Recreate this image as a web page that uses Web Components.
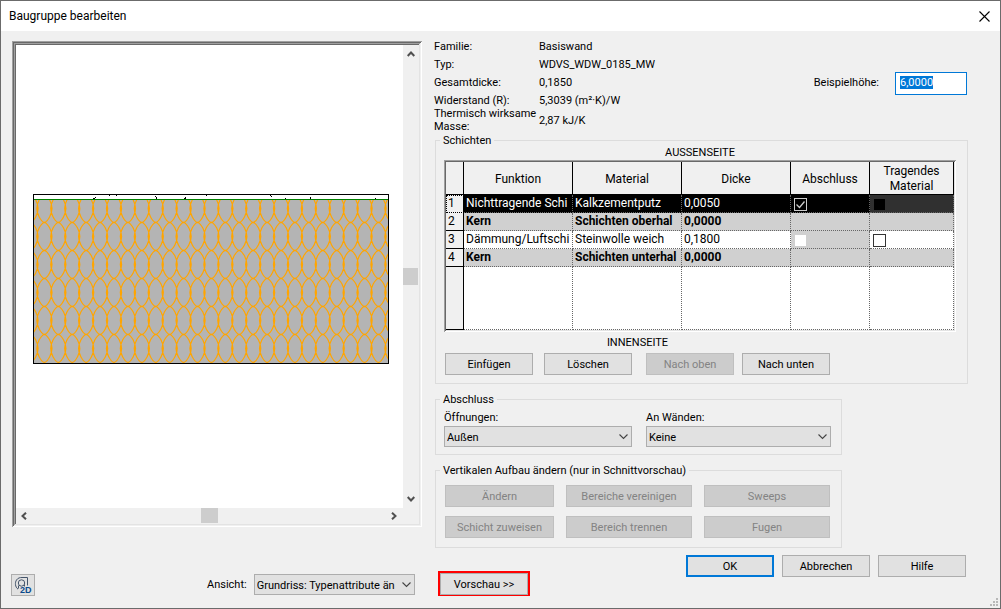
<!DOCTYPE html>
<html lang="de">
<head>
<meta charset="utf-8">
<title>Baugruppe bearbeiten</title>
<style>
  html, body {
    margin: 0;
    min-height: 100%;
  }
  body {
    --face: #f0f0f0;
    --line: #dcdcdc;
    --accent: #0078d7;
    display: flex;
    min-height: 100vh;
    font: 11px/13px Roboto, "Noto Sans", sans-serif;
    color: #000;
  }
</style>
</head>
<body>
<app-dialog caption="Baugruppe bearbeiten">
  <wall-preview slot="left"></wall-preview>
  <view-bar slot="left"></view-bar>
  <type-info slot="right"></type-info>
  <group-box slot="right" caption="Schichten">
    <layer-editor></layer-editor>
  </group-box>
  <group-box slot="right" caption="Abschluss" narrow>
    <wrap-options></wrap-options>
  </group-box>
  <group-box slot="right" caption="Vertikalen Aufbau ändern (nur in Schnittvorschau)" narrow>
    <vertical-tools></vertical-tools>
  </group-box>
  <dialog-actions slot="right"></dialog-actions>
</app-dialog>

<script>
class AppDialog extends HTMLElement {
  constructor() {
    super();
    this.attachShadow({ mode: 'open' });
  }

  connectedCallback() {
    this.shadowRoot.innerHTML = `
      <style>
        :host {
          position: relative;
          display: flex;
          flex-direction: column;
          flex: 1;
          box-sizing: border-box;
          border: 1px solid #6b6b6b;
          background: var(--face);
        }
        header {
          display: flex;
          align-items: center;
          justify-content: space-between;
          height: 30px;
          padding: 0 10px 0 8px;
          background: #fff;
        }
        h1 {
          margin: 0;
          font-size: 12px;
          font-weight: 400;
        }
        .close {
          display: flex;
          padding: 0;
          border: 0;
          background: none;
        }
        main {
          display: grid;
          grid-template-columns: minmax(0, 10fr) minmax(0, 13fr);
          column-gap: 13px;
          flex: 1;
          padding: 9px 32px 12px 11px;
        }
        .col {
          display: flex;
          flex-direction: column;
          min-width: 0;
        }
        .grip {
          position: absolute;
          right: 2px;
          bottom: 2px;
        }
      </style>
      <header>
        <h1>${this.getAttribute('caption')}</h1>
        <button class="close" aria-label="Schließen">
          <svg width="11" height="11" viewBox="0 0 11 11"><path d="M.5.5l10 10M10.5.5l-10 10" stroke="#000" stroke-width="1.1"/></svg>
        </button>
      </header>
      <main>
        <div class="col"><slot name="left"></slot></div>
        <div class="col"><slot name="right"></slot></div>
      </main>
      <svg class="grip" width="8" height="8" viewBox="0 0 8 8" fill="#b8b8b8">
        <path d="M6 0h2v2h-2zM3 3h2v2h-2zM6 3h2v2h-2zM0 6h2v2h-2zM3 6h2v2h-2zM6 6h2v2h-2z"/>
      </svg>
    `;
  }
}

class PushButton extends HTMLElement {
  constructor() {
    super();
    this.attachShadow({ mode: 'open' });
  }

  connectedCallback() {
    this.shadowRoot.innerHTML = `
      <style>
        :host {
          display: block;
          width: 88px;
          height: 22px;
        }
        button {
          display: block;
          box-sizing: border-box;
          width: 100%;
          height: 100%;
          padding: 0;
          border: 1px solid #adadad;
          background: #e1e1e1;
          color: #000;
          font: inherit;
        }
        button:disabled {
          border-color: #bfbfbf;
          background: #ccc;
          color: #838383;
        }
        :host([primary]) button {
          border: 2px solid var(--accent);
        }
      </style>
      <button ${this.hasAttribute('disabled') ? 'disabled' : ''}><slot></slot></button>
    `;
  }
}

class DropDown extends HTMLElement {
  constructor() {
    super();
    this.attachShadow({ mode: 'open' });
  }

  connectedCallback() {
    this.shadowRoot.innerHTML = `
      <style>
        :host {
          display: flex;
          flex-direction: column;
          gap: 2px;
        }
        :host([inline]) {
          flex-direction: row;
          align-items: center;
          gap: 7px;
        }
        .box {
          display: grid;
          flex: 1;
          align-items: center;
        }
        select, svg {
          grid-area: 1 / 1;
        }
        select {
          box-sizing: border-box;
          width: 100%;
          height: 21px;
          padding: 1px 17px 0 2px;
          border: 1px solid #adadad;
          border-radius: 0;
          background: #e1e1e1;
          color: #000;
          font: inherit;
          appearance: none;
        }
        svg {
          justify-self: end;
          margin-right: 4px;
          pointer-events: none;
        }
      </style>
      <label for="field">${this.getAttribute('label')}</label>
      <div class="box">
        <select id="field"><option>${this.getAttribute('value')}</option></select>
        <svg width="9" height="6" viewBox="0 0 9 6"><path d="M.5.5l4 4 4-4" fill="none" stroke="#444" stroke-width="1.1"/></svg>
      </div>
    `;
  }
}

class WallPreview extends HTMLElement {
  constructor() {
    super();
    this.attachShadow({ mode: 'open' });
  }

  connectedCallback() {
    this.shadowRoot.innerHTML = `
      <style>
        :host {
          display: grid;
          grid-template-columns: minmax(0, 1fr) 15px;
          grid-template-rows: minmax(0, 1fr) 15px;
          flex: 1;
          min-height: 0;
          margin-top: 1px;
          padding: 4px;
          background: var(--face);
          box-shadow:
            inset 1px 1px #a0a0a0, inset -1px -1px #fff,
            inset 2px 2px #696969, inset -2px -2px #f0f0f0,
            inset 3px 3px #a0a0a0, inset -3px -3px #e3e3e3,
            inset 4px 4px #696969;
        }
        .view {
          display: block;
          width: 100%;
          height: 100%;
          background: #fff;
        }
        .bar {
          display: flex;
          align-items: center;
          justify-content: space-between;
        }
        .v {
          flex-direction: column;
          padding: 6px 0;
        }
        .h {
          padding: 0 6px 0 5px;
        }
        .thumb {
          width: 17px;
          height: 15px;
          background: #cdcdcd;
        }
        .v .thumb {
          width: 15px;
          height: 17px;
        }
        path {
          fill: none;
        }
        .bar path {
          stroke: #505050;
          stroke-width: 2;
        }
      </style>
      <svg class="view" viewBox="0 0 387 463">
        <defs>
          <clipPath id="core"><rect x="18" y="155" width="354" height="163"/></clipPath>
        </defs>
        <g shape-rendering="crispEdges">
          <rect x="17.5" y="149.5" width="355" height="169" fill="#fff" stroke="#000"/>
          <rect x="18" y="155" width="354" height="163" fill="#b4b4b4"/>
          <path d="M18 154.5h354" stroke="#008000"/>
          <path d="M77 153.5h2M79 152.5h1M93 150.5h1M100 150.5h1M139 151.5h1M140 152.5h1M140 153.5h1M168 153.5h2M169 152.5h1M190 150.5h1M254 150.5h1M255 151.5h1M269 153.5h1M294 152.5h1M294 153.5h1M359 153.5h1" stroke="#000"/>
        </g>
        <path id="fibre" clip-path="url(#core)" stroke="#ffa500" stroke-width="1.2"/>
      </svg>
      <div class="bar v">
        <svg width="8" height="6" viewBox="0 0 8 6"><path d="M.7 5l3.3-3.5 3.3 3.5"/></svg>
        <div class="thumb"></div>
        <svg width="8" height="6" viewBox="0 0 8 6"><path d="M.7 1l3.3 3.5 3.3-3.5"/></svg>
      </div>
      <div class="bar h">
        <svg width="6" height="8" viewBox="0 0 6 8"><path d="M5 .7l-3.5 3.3 3.5 3.3"/></svg>
        <div class="thumb"></div>
        <svg width="6" height="8" viewBox="0 0 6 8"><path d="M1 .7l3.5 3.3-3.5 3.3"/></svg>
      </div>
    `;
    this.shadowRoot.getElementById('fibre').setAttribute('d', this.fibres());
  }

  // insulation hatch: rows of pointed ovals that cross slightly at their sides
  fibres() {
    let d = '';
    for (let row = 0; row < 6; row++) {
      for (let i = -1; i < 26; i++) {
        const x = 28.4 + i * 13.92;
        const y = 149.2 + row * 28;
        d += `M${x} ${y}c4 1.5 7.6 9.5 7.6 14.2s-3.6 12.7-7.6 14.2c-4-1.5-7.6-9.5-7.6-14.2s3.6-12.7 7.6-14.2`;
      }
    }
    return d;
  }
}

class ViewBar extends HTMLElement {
  constructor() {
    super();
    this.attachShadow({ mode: 'open' });
  }

  connectedCallback() {
    this.shadowRoot.innerHTML = `
      <style>
        :host {
          display: flex;
          align-items: center;
          justify-content: space-between;
          height: 23px;
          margin-top: 46px;
          padding-right: 7px;
        }
        button {
          display: flex;
          align-items: center;
          justify-content: center;
          box-sizing: border-box;
          width: 24px;
          height: 22px;
          margin-left: -1px;
          padding: 0;
          border: 1px solid #adadad;
          background: #e1e1e1;
        }
        drop-down {
          width: 208px;
        }
      </style>
      <button aria-label="2D-Ansicht">
        <svg width="18" height="18" viewBox="0 0 18 18" fill="none" stroke="#44546a">
          <path d="M4 13.2C1 11 .8 6.500 2.500 4 4 1.800 6 1.500 8 1.500h5.500v8"/>
          <circle cx="7.500" cy="7" r="3.200"/>
          <path d="M4.500 9.500v3M10.500 8.500v2"/>
          <text x="6" y="17" font-size="9" font-weight="700" fill="#0a4a8c" stroke="none">2D</text>
        </svg>
      </button>
      <drop-down inline label="Ansicht:" value="Grundriss: Typenattribute än"></drop-down>
    `;
  }
}

class TypeInfo extends HTMLElement {
  constructor() {
    super();
    this.attachShadow({ mode: 'open' });
  }

  connectedCallback() {
    this.shadowRoot.innerHTML = `
      <style>
        :host {
          display: flex;
          align-items: flex-start;
          justify-content: space-between;
          padding-right: 1px;
        }
        dl {
          display: grid;
          grid-template-columns: 105px auto;
          align-items: center;
          margin: 0 0 0 -1px;
          white-space: nowrap;
        }
        dt, dd {
          margin: 0;
        }
        .row {
          padding-bottom: 5px;
        }
        .example {
          display: flex;
          align-items: baseline;
          gap: 16px;
          margin-top: 32px;
        }
        input {
          box-sizing: border-box;
          width: 72px;
          height: 23px;
          padding: 0 4px 3px;
          border: 1px solid var(--accent);
          outline: 0;
          background: #fff;
          font: inherit;
        }
        input::selection {
          background: var(--accent);
          color: #fff;
        }
      </style>
      <dl>
        <dt class="row">Familie:</dt><dd class="row">Basiswand</dd>
        <dt class="row">Typ:</dt><dd class="row">WDVS_WDW_0185_MW</dd>
        <dt class="row">Gesamtdicke:</dt><dd class="row">0,1850</dd>
        <dt>Widerstand (R):</dt><dd>5,3039 (m²·K)/W</dd>
        <dt>Thermisch wirksame<br>Masse:</dt><dd>2,87 kJ/K</dd>
      </dl>
      <div class="example">
        <label for="height">Beispielhöhe:</label>
        <input id="height" type="text" value="6,0000">
      </div>
    `;
    const input = this.shadowRoot.getElementById('height');
    input.focus();
    input.select();
  }
}

class GroupBox extends HTMLElement {
  constructor() {
    super();
    this.attachShadow({ mode: 'open' });
  }

  connectedCallback() {
    this.shadowRoot.innerHTML = `
      <style>
        :host {
          display: block;
          margin-top: 1px;
        }
        :host([narrow]) {
          margin-top: 9px;
          margin-right: 126px;
        }
        fieldset {
          min-width: 0;
          margin: 0;
          padding: 0 8px 7px;
          border: 1px solid var(--line);
        }
        legend {
          margin-left: -4px;
          padding: 0 3px;
        }
      </style>
      <fieldset>
        <legend>${this.getAttribute('caption')}</legend>
        <slot></slot>
      </fieldset>
    `;
  }
}

class LayerTable extends HTMLElement {
  constructor() {
    super();
    this.attachShadow({ mode: 'open' });
  }

  connectedCallback() {
    this.shadowRoot.innerHTML = `
      <style>
        :host {
          display: block;
          padding: 2px;
          font-size: 12px;
          line-height: 15px;
          box-shadow:
            inset 1px 1px #a0a0a0, inset -1px -1px #fff,
            inset 2px 2px #696969, inset -2px -2px #e3e3e3;
        }
        table {
          width: 100%;
          table-layout: fixed;
          border-collapse: separate;
          border-spacing: 0;
          background: #fff;
        }
        th, td {
          box-sizing: border-box;
          height: 18px;
          padding: 0 0 0 2px;
          overflow: hidden;
          border: 0 dotted #666;
          border-width: 0 1px 1px 0;
          text-align: left;
          white-space: nowrap;
        }
        th {
          padding: 0;
          border-color: #000;
          border-style: solid;
          background: var(--face);
          font-weight: 400;
          text-align: center;
        }
        thead th {
          height: 33px;
          padding-top: 2px;
          white-space: normal;
        }
        tbody th {
          padding-left: 2px;
          text-align: left;
        }
        .selected td {
          background: #000;
          color: #fff;
        }
        .selected td:last-child {
          background: #303030;
        }
        .selected th {
          border-bottom-style: dotted;
          outline: 1px dotted #000;
          outline-offset: -1px;
        }
        .core td {
          background: #d0d0d0;
          font-weight: 700;
        }
        td.off {
          background: #d0d0d0;
        }
        .rest th, .rest td {
          height: 63px;
        }
        input {
          display: block;
          box-sizing: border-box;
          width: 13px;
          height: 13px;
          margin: 2px 0 0 1px;
          border: 1px solid #333;
          background: #fff;
          appearance: none;
        }
        .off input {
          border-color: #d0d0d0;
        }
        .selected input {
          border-color: #303030;
          background: #000;
        }
        .tick {
          display: grid;
        }
        .tick input, .tick svg {
          grid-area: 1 / 1;
        }
        .selected .tick input {
          border-color: #ccc;
        }
        .tick svg {
          margin: 2px 0 0 1px;
        }
      </style>
      <table>
        <colgroup>
          <col style="width: 18px"><col><col><col><col style="width: 79px"><col style="width: 84px">
        </colgroup>
        <thead>
          <tr><th></th><th>Funktion</th><th>Material</th><th>Dicke</th><th>Abschluss</th><th>Tragendes Material</th></tr>
        </thead>
        <tbody>
          <tr class="selected">
            <th>1</th><td>Nichttragende Schi</td><td>Kalkzementputz</td><td>0,0050</td>
            <td><div class="tick">
              <input type="checkbox" checked aria-label="Abschluss Schicht 1">
              <svg width="13" height="13" viewBox="0 0 13 13"><path d="M2.500 6.500l3 3 5-6" fill="none" stroke="#ccc" stroke-width="1.300"/></svg>
            </div></td>
            <td><input type="checkbox" aria-label="Tragendes Material Schicht 1" disabled></td>
          </tr>
          <tr class="core"><th>2</th><td>Kern</td><td>Schichten oberhal</td><td>0,0000</td><td></td><td></td></tr>
          <tr>
            <th>3</th><td>Dämmung/Luftschi</td><td>Steinwolle weich</td><td>0,1800</td>
            <td class="off"><input type="checkbox" aria-label="Abschluss Schicht 3" disabled></td>
            <td><input type="checkbox" aria-label="Tragendes Material Schicht 3"></td>
          </tr>
          <tr class="core"><th>4</th><td>Kern</td><td>Schichten unterhal</td><td>0,0000</td><td></td><td></td></tr>
          <tr class="rest"><th></th><td></td><td></td><td></td><td></td><td></td></tr>
        </tbody>
      </table>
    `;
  }
}

class LayerEditor extends HTMLElement {
  constructor() {
    super();
    this.attachShadow({ mode: 'open' });
  }

  connectedCallback() {
    this.shadowRoot.innerHTML = `
      <style>
        :host {
          display: block;
          padding: 0 3px 1px 0;
        }
        .side {
          text-align: center;
        }
        .outer {
          padding-bottom: 2px;
          line-height: 11px;
        }
        .below {
          width: fit-content;
          padding: 4px 0 0 1px;
        }
        .buttons {
          display: flex;
          gap: 11px;
          padding-top: 4px;
        }
        .move {
          display: flex;
          gap: 8px;
          margin-left: 3px;
        }
      </style>
      <div class="side outer">AUSSENSEITE</div>
      <layer-table></layer-table>
      <div class="below">
        <div class="side">INNENSEITE</div>
        <div class="buttons">
          <push-button>Einfügen</push-button>
          <push-button>Löschen</push-button>
          <div class="move">
            <push-button disabled>Nach oben</push-button>
            <push-button>Nach unten</push-button>
          </div>
        </div>
      </div>
    `;
  }
}

class WrapOptions extends HTMLElement {
  constructor() {
    super();
    this.attachShadow({ mode: 'open' });
  }

  connectedCallback() {
    this.shadowRoot.innerHTML = `
      <style>
        :host {
          display: grid;
          grid-template-columns: 188fr 185fr;
          gap: 14px;
          padding: 5px 2px 0 0;
        }
      </style>
      <drop-down label="Öffnungen:" value="Außen"></drop-down>
      <drop-down label="An Wänden:" value="Keine"></drop-down>
    `;
  }
}

class VerticalTools extends HTMLElement {
  constructor() {
    super();
    this.attachShadow({ mode: 'open' });
  }

  connectedCallback() {
    this.shadowRoot.innerHTML = `
      <style>
        :host {
          display: grid;
          grid-template-columns: 109fr 126fr 126fr;
          gap: 9px 12px;
          padding: 8px 3px 2px 1px;
        }
        push-button {
          width: auto;
        }
      </style>
      <push-button disabled>Ändern</push-button>
      <push-button disabled>Bereiche vereinigen</push-button>
      <push-button disabled>Sweeps</push-button>
      <push-button disabled>Schicht zuweisen</push-button>
      <push-button disabled>Bereich trennen</push-button>
      <push-button disabled>Fugen</push-button>
    `;
  }
}

class DialogActions extends HTMLElement {
  constructor() {
    super();
    this.attachShadow({ mode: 'open' });
  }

  connectedCallback() {
    this.shadowRoot.innerHTML = `
      <style>
        :host {
          display: flex;
          justify-content: space-between;
          height: 41px;
          margin-top: 7px;
          padding: 0 2px 0 3px;
        }
        .marked {
          align-self: flex-end;
          box-sizing: border-box;
          width: 92px;
          height: 25px;
          border: 2px solid #f00;
        }
        .group {
          display: flex;
          gap: 8px;
        }
      </style>
      <div class="marked"><push-button>Vorschau &gt;&gt;</push-button></div>
      <div class="group">
        <push-button primary>OK</push-button>
        <push-button>Abbrechen</push-button>
        <push-button>Hilfe</push-button>
      </div>
    `;
  }
}

customElements.define('push-button', PushButton);
customElements.define('drop-down', DropDown);
customElements.define('wall-preview', WallPreview);
customElements.define('view-bar', ViewBar);
customElements.define('type-info', TypeInfo);
customElements.define('group-box', GroupBox);
customElements.define('layer-table', LayerTable);
customElements.define('layer-editor', LayerEditor);
customElements.define('wrap-options', WrapOptions);
customElements.define('vertical-tools', VerticalTools);
customElements.define('dialog-actions', DialogActions);
customElements.define('app-dialog', AppDialog);
</script>
</body>
</html>
